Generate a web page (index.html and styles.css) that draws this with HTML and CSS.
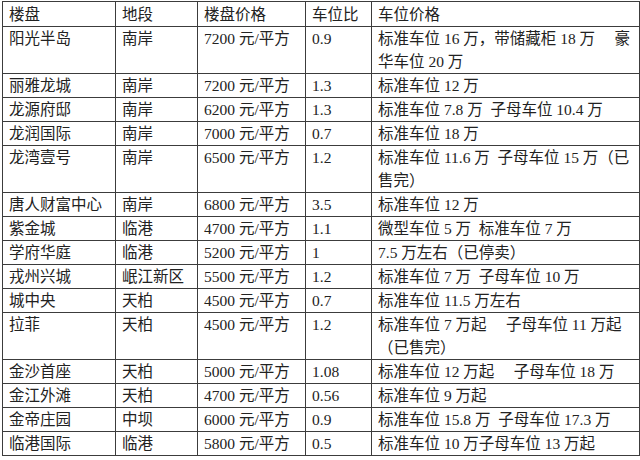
FILE: index.html
```html
<!DOCTYPE html>
<html lang="zh-CN">
<head>
<meta charset="utf-8">
<title>车位价格</title>
<link rel="stylesheet" href="styles.css">
</head>
<body>
<table class="price-table">
  <colgroup>
    <col class="c-name">
    <col class="c-area">
    <col class="c-price">
    <col class="c-ratio">
    <col class="c-park">
  </colgroup>
  <tr class="head"><td>楼盘</td><td>地段</td><td>楼盘价格</td><td>车位比</td><td>车位价格</td></tr>
  <tr><td>阳光半岛</td><td>南岸</td><td>7200 元/平方</td><td>0.9</td><td>标准车位 16 万，带储藏柜 18 万&nbsp;&nbsp;&nbsp;&nbsp; 豪<br>华车位 20 万</td></tr>
  <tr><td>丽雅龙城</td><td>南岸</td><td>7200 元/平方</td><td>1.3</td><td>标准车位 12 万</td></tr>
  <tr><td>龙源府邸</td><td>南岸</td><td>6200 元/平方</td><td>1.3</td><td>标准车位 7.8 万&nbsp; 子母车位 10.4 万</td></tr>
  <tr><td>龙润国际</td><td>南岸</td><td>7000 元/平方</td><td>0.7</td><td>标准车位 18 万</td></tr>
  <tr><td>龙湾壹号</td><td>南岸</td><td>6500 元/平方</td><td>1.2</td><td>标准车位 11.6 万&nbsp; 子母车位 15 万（已<br>售完）</td></tr>
  <tr><td>唐人财富中心</td><td>南岸</td><td>6800 元/平方</td><td>3.5</td><td>标准车位 12 万</td></tr>
  <tr><td>紫金城</td><td>临港</td><td>4700 元/平方</td><td>1.1</td><td>微型车位 5 万&nbsp; 标准车位 7 万</td></tr>
  <tr><td>学府华庭</td><td>临港</td><td>5200 元/平方</td><td>1</td><td>7.5 万左右（已停卖）</td></tr>
  <tr><td>戎州兴城</td><td>岷江新区</td><td>5500 元/平方</td><td>1.2</td><td>标准车位 7 万&nbsp; 子母车位 10 万</td></tr>
  <tr><td>城中央</td><td>天柏</td><td>4500 元/平方</td><td>0.7</td><td>标准车位 11.5 万左右</td></tr>
  <tr><td>拉菲</td><td>天柏</td><td>4500 元/平方</td><td>1.2</td><td>标准车位 7 万起&nbsp;&nbsp;&nbsp;&nbsp; 子母车位 11 万起<br>（已售完）</td></tr>
  <tr><td>金沙首座</td><td>天柏</td><td>5000 元/平方</td><td>1.08</td><td>标准车位 12 万起&nbsp;&nbsp;&nbsp;&nbsp; 子母车位 18 万</td></tr>
  <tr><td>金江外滩</td><td>天柏</td><td>4700 元/平方</td><td>0.56</td><td>标准车位 9 万起</td></tr>
  <tr><td>金帝庄园</td><td>中坝</td><td>6000 元/平方</td><td>0.9</td><td>标准车位 15.8 万&nbsp; 子母车位 17.3 万</td></tr>
  <tr><td>临港国际</td><td>临港</td><td>5800 元/平方</td><td>0.5</td><td>标准车位 10 万子母车位 13 万起</td></tr>
</table>
</body>
</html>
```
FILE: styles.css
```css
html, body {
  margin: 0;
  padding: 0;
  background: #ffffff;
}

.price-table {
  margin: 1px 0 0 2px;
  width: 637px;
  table-layout: fixed;
  border-collapse: collapse;
  font-family: "Liberation Serif", "Noto Sans CJK SC", serif;
  font-size: 15.5px;
  line-height: 23px;
  color: #222222;
}

.c-name { width: 113px; }
.c-area { width: 82px; }
.c-price { width: 108px; }
.c-ratio { width: 66px; }
.c-park { width: 268px; }

.price-table td {
  border: 1px solid #3c3c3c;
  padding: 0 0 0 6px;
  vertical-align: top;
  white-space: nowrap;
  overflow: hidden;
}

.price-table .head td {
  padding-top: 1px;
}
```
